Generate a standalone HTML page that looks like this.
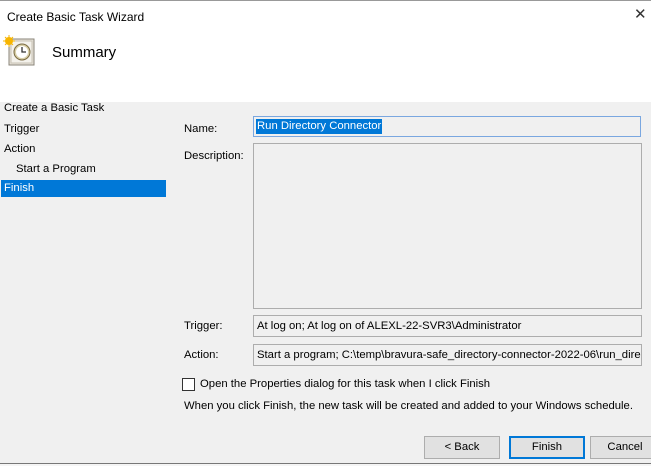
<!DOCTYPE html>
<html><head><style>
body{margin:0;width:651px;height:466px;overflow:hidden;background:#f0f0f0;font-family:"Liberation Sans",sans-serif;font-size:11.3px;color:#000;position:relative}
.a{position:absolute;white-space:nowrap}
.box{position:absolute;border:1px solid #adadad;background:#f0f0f0;box-sizing:border-box}
.btn{position:absolute;top:436px;height:23px;width:76px;border:1px solid #adadad;background:#e1e1e1;box-sizing:border-box;text-align:center;line-height:21px}
</style></head><body>
<div class="a" style="left:0;top:0;width:651px;height:101px;background:#fff;border-top:1px solid #999"></div>
<div class="a" style="left:7px;top:10px;font-size:12px">Create Basic Task Wizard</div>
<div class="a" style="left:634px;top:5px;font-size:15px;color:#333">✕</div>
<svg class="a" style="left:3px;top:35px" width="32" height="32" viewBox="0 0 32 32">
<rect x="6" y="4" width="25" height="26" fill="#e8e4dc" stroke="#8a8478"/>
<rect x="8" y="6" width="21" height="22" fill="#f4f2ec" stroke="#c8c2b4"/>
<circle cx="19" cy="17" r="8" fill="#d8cfa8" stroke="#7a6a40"/>
<circle cx="19" cy="17" r="6" fill="#fff"/>
<path d="M19 12v5h4" stroke="#333" stroke-width="1.3" fill="none"/>
<circle cx="6" cy="6" r="4" fill="#f7b500"/>
<path d="M6 0v12M0 6h12M2 2l8 8M10 2l-8 8" stroke="#f7b500" stroke-width="1"/>
</svg>
<div class="a" style="left:52px;top:44px;font-size:15px">Summary</div>
<div class="a" style="left:4px;top:102px">Create a Basic Task</div>
<div class="a" style="left:4px;top:123px">Trigger</div>
<div class="a" style="left:4px;top:143px">Action</div>
<div class="a" style="left:16px;top:163px">Start a Program</div>
<div class="a" style="left:1px;top:180px;width:165px;height:17px;background:#0078d7;color:#fff;padding-left:3px;box-sizing:border-box;line-height:17px">Finish</div>
<div class="a" style="left:184px;top:123px">Name:</div>
<div class="box" style="left:253px;top:116px;width:388px;height:21px;border-color:#7aa7e0"><span class="a" style="left:2px;top:2px;background:#0078d7;color:#fff;padding:0 1px;line-height:15px">Run Directory Connector</span></div>
<div class="a" style="left:184px;top:150px">Description:</div>
<div class="box" style="left:253px;top:143px;width:389px;height:166px"></div>
<div class="a" style="left:184px;top:320px">Trigger:</div>
<div class="box" style="left:253px;top:315px;width:389px;height:22px"><span class="a" style="left:3px;top:4px">At log on; At log on of ALEXL-22-SVR3\Administrator</span></div>
<div class="a" style="left:184px;top:349px">Action:</div>
<div class="box" style="left:253px;top:344px;width:389px;height:22px;overflow:hidden"><span class="a" style="left:3px;top:4px">Start a program; C:\temp\bravura-safe_directory-connector-2022-06\run_directory</span></div>
<div class="a" style="left:182px;top:378px;width:13px;height:13px;border:1px solid #333;background:#fff;box-sizing:border-box"></div>
<div class="a" style="left:200px;top:378px">Open the Properties dialog for this task when I click Finish</div>
<div class="a" style="left:184px;top:400px">When you click Finish, the new task will be created and added to your Windows schedule.</div>
<div class="btn" style="left:424px">&lt; Back</div>
<div class="btn" style="left:509px;border:2px solid #0078d7;line-height:19px">Finish</div>
<div class="btn" style="left:590px;width:70px">Cancel</div>
<div class="a" style="left:0;top:463px;width:651px;height:1px;background:#777"></div>
<div class="a" style="left:0;top:464px;width:651px;height:2px;background:#f5f5f5"></div>
</body></html>
